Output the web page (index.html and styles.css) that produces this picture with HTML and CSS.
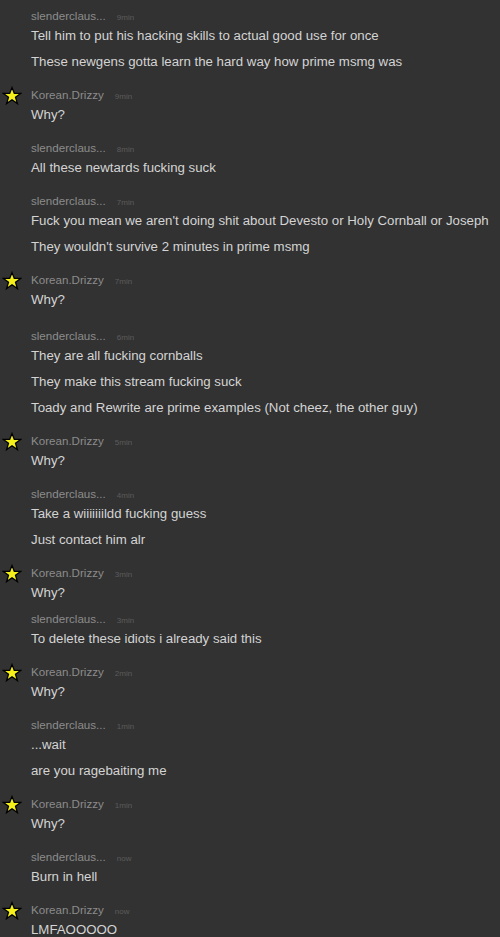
FILE: index.html
```html
<!DOCTYPE html>
<html>
<head>
<meta charset="utf-8">
<link rel="stylesheet" href="styles.css">
</head>
<body>
<div class="chat">
  <div class="group">
    <div class="head"><span class="name">slenderclaus...</span><span class="time">9min</span></div>
    <div class="msg">Tell him to put his hacking skills to actual good use for once</div>
    <div class="msg">These newgens gotta learn the hard way how prime msmg was</div>
  </div>
  <div class="group mod">
    <svg class="star" viewBox="0 0 20 20"><polygon points="10,1.5 12.3,7.4 18.6,7.4 13.5,11.3 15.4,17.6 10,13.8 4.6,17.6 6.5,11.3 1.4,7.4 7.7,7.4"/></svg>
    <div class="head"><span class="name">Korean.Drizzy</span><span class="time">9min</span></div>
    <div class="msg">Why?</div>
  </div>
  <div class="group">
    <div class="head"><span class="name">slenderclaus...</span><span class="time">8min</span></div>
    <div class="msg">All these newtards fucking suck</div>
  </div>
  <div class="group">
    <div class="head"><span class="name">slenderclaus...</span><span class="time">7min</span></div>
    <div class="msg">Fuck you mean we aren't doing shit about Devesto or Holy Cornball or Joseph</div>
    <div class="msg">They wouldn't survive 2 minutes in prime msmg</div>
  </div>
  <div class="group mod">
    <svg class="star" viewBox="0 0 20 20"><polygon points="10,1.5 12.3,7.4 18.6,7.4 13.5,11.3 15.4,17.6 10,13.8 4.6,17.6 6.5,11.3 1.4,7.4 7.7,7.4"/></svg>
    <div class="head"><span class="name">Korean.Drizzy</span><span class="time">7min</span></div>
    <div class="msg">Why?</div>
  </div>
  <div class="group wide">
    <div class="head"><span class="name">slenderclaus...</span><span class="time">6min</span></div>
    <div class="msg">They are all fucking cornballs</div>
    <div class="msg">They make this stream fucking suck</div>
    <div class="msg">Toady and Rewrite are prime examples (Not cheez, the other guy)</div>
  </div>
  <div class="group mod">
    <svg class="star" viewBox="0 0 20 20"><polygon points="10,1.5 12.3,7.4 18.6,7.4 13.5,11.3 15.4,17.6 10,13.8 4.6,17.6 6.5,11.3 1.4,7.4 7.7,7.4"/></svg>
    <div class="head"><span class="name">Korean.Drizzy</span><span class="time">5min</span></div>
    <div class="msg">Why?</div>
  </div>
  <div class="group">
    <div class="head"><span class="name">slenderclaus...</span><span class="time">4min</span></div>
    <div class="msg">Take a wiiiiiiildd fucking guess</div>
    <div class="msg">Just contact him alr</div>
  </div>
  <div class="group mod">
    <svg class="star" viewBox="0 0 20 20"><polygon points="10,1.5 12.3,7.4 18.6,7.4 13.5,11.3 15.4,17.6 10,13.8 4.6,17.6 6.5,11.3 1.4,7.4 7.7,7.4"/></svg>
    <div class="head"><span class="name">Korean.Drizzy</span><span class="time">3min</span></div>
    <div class="msg">Why?</div>
  </div>
  <div class="group tight">
    <div class="head"><span class="name">slenderclaus...</span><span class="time">3min</span></div>
    <div class="msg">To delete these idiots i already said this</div>
  </div>
  <div class="group mod">
    <svg class="star" viewBox="0 0 20 20"><polygon points="10,1.5 12.3,7.4 18.6,7.4 13.5,11.3 15.4,17.6 10,13.8 4.6,17.6 6.5,11.3 1.4,7.4 7.7,7.4"/></svg>
    <div class="head"><span class="name">Korean.Drizzy</span><span class="time">2min</span></div>
    <div class="msg">Why?</div>
  </div>
  <div class="group">
    <div class="head"><span class="name">slenderclaus...</span><span class="time">1min</span></div>
    <div class="msg">...wait</div>
    <div class="msg">are you ragebaiting me</div>
  </div>
  <div class="group mod">
    <svg class="star" viewBox="0 0 20 20"><polygon points="10,1.5 12.3,7.4 18.6,7.4 13.5,11.3 15.4,17.6 10,13.8 4.6,17.6 6.5,11.3 1.4,7.4 7.7,7.4"/></svg>
    <div class="head"><span class="name">Korean.Drizzy</span><span class="time">1min</span></div>
    <div class="msg">Why?</div>
  </div>
  <div class="group">
    <div class="head"><span class="name">slenderclaus...</span><span class="time">now</span></div>
    <div class="msg">Burn in hell</div>
  </div>
  <div class="group mod">
    <svg class="star" viewBox="0 0 20 20"><polygon points="10,1.5 12.3,7.4 18.6,7.4 13.5,11.3 15.4,17.6 10,13.8 4.6,17.6 6.5,11.3 1.4,7.4 7.7,7.4"/></svg>
    <div class="head"><span class="name">Korean.Drizzy</span><span class="time">now</span></div>
    <div class="msg">LMFAOOOOO</div>
  </div>
</div>
</body>
</html>
```
FILE: styles.css
```css
html, body {
  margin: 0;
  padding: 0;
  background: #323232;
  overflow: hidden;
}
.chat {
  padding: 8px 0 0 31px;
  display: flex;
  flex-direction: column;
  gap: 16px;
  font-family: "Liberation Sans", Arial, sans-serif;
}
.group {
  position: relative;
  display: flex;
  flex-direction: column;
  gap: 8px;
}
.group.wide {
  margin-top: 3px;
}
.group.tight {
  margin-top: -7px;
}
.head {
  height: 16px;
  line-height: 16px;
  margin-bottom: -5px;
  display: flex;
  align-items: baseline;
  gap: 11px;
  overflow: hidden;
}
.name {
  font-size: 11.6px;
  color: #8c8c8c;
}
.time {
  font-size: 8px;
  color: #5c5c5c;
}
.msg {
  height: 18px;
  font-size: 13.25px;
  line-height: 18px;
  color: #d4d4d4;
  white-space: nowrap;
}
.star {
  position: absolute;
  left: -29px;
  top: -1px;
  width: 20px;
  height: 20px;
  fill: #f5f01a;
  stroke: #000;
  stroke-width: 1.3;
  stroke-linejoin: miter;
}
```
